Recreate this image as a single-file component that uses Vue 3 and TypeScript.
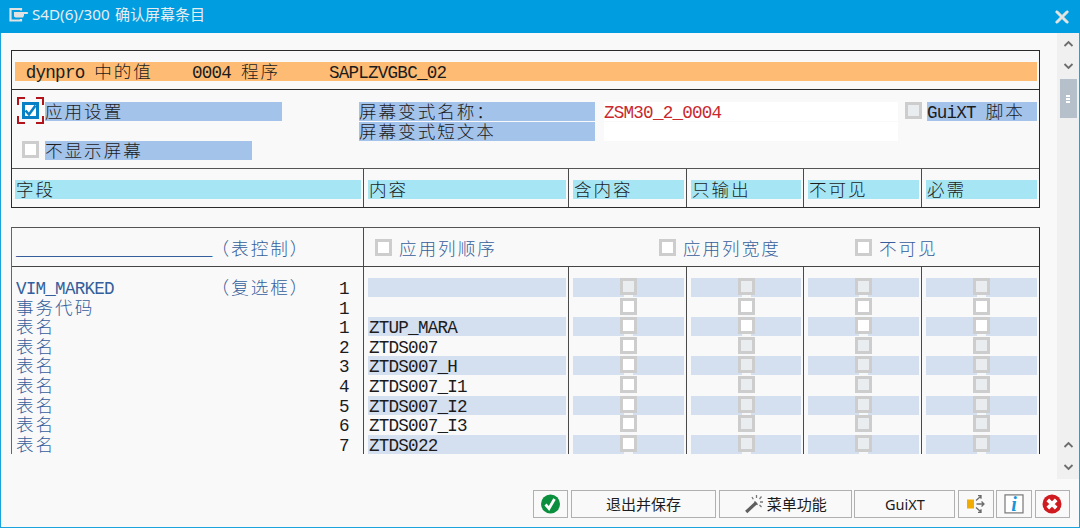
<script setup lang="ts">
import { h, type FunctionalComponent } from 'vue'

// Text on a character grid: half-width glyphs take one cell, full-width ones two.
const Mono: FunctionalComponent<{ text: string }> = (props) =>
  h(
    'span',
    { class: 'mono' },
    (props.text.match(/[\x20-\x7e]+|[^\x20-\x7e]+/g) ?? []).map((run) =>
      h('span', { class: run.charCodeAt(0) < 127 ? 'half' : 'full' }, run),
    ),
  )
Mono.props = ['text']

interface Row {
  name: string
  kind?: string
  count: number
  content: string
  enabled: boolean[]
}

const columns = ['字段', '内容', '含内容', '只输出', '不可见', '必需']
const all = [true, true, true, true]
const none = [false, false, false, false]
const first = [true, false, false, false]

const rows: Row[] = [
  { name: 'VIM_MARKED', kind: '（复选框）', count: 1, content: '', enabled: none },
  { name: '事务代码', count: 1, content: '', enabled: all },
  { name: '表名', count: 1, content: 'ZTUP_MARA', enabled: all },
  { name: '表名', count: 2, content: 'ZTDS007', enabled: first },
  { name: '表名', count: 3, content: 'ZTDS007_H', enabled: first },
  { name: '表名', count: 4, content: 'ZTDS007_I1', enabled: first },
  { name: '表名', count: 5, content: 'ZTDS007_I2', enabled: first },
  { name: '表名', count: 6, content: 'ZTDS007_I3', enabled: first },
  { name: '表名', count: 7, content: 'ZTDS022', enabled: first },
]
</script>

<template>
  <div class="window">
    <header class="titlebar">
      <svg class="app-icon" width="21" height="17" viewBox="0 0 21 17">
        <path d="M13 4.500V3H2.500v11.500H13V13" fill="none" stroke="#e2e2e2" stroke-width="2.200" />
        <path d="M6 6h13.500l.8.900-.8 1.100h-3.500v1.500l-1 2H7.500L6 10.500z" fill="#e2e2e2" />
      </svg>
      <h1 class="title"><span class="title-code">S4D(6)/300</span><span>确认屏幕条目</span></h1>
      <svg class="close" width="16" height="16" viewBox="0 0 16 16">
        <path d="M2 2h1.500L8 6.500 12.500 2H14v1.500L9.500 8l4.500 4.500V14h-1.500L8 9.500 3.500 14H2v-1.500L6.500 8 2 3.500z" fill="#e9e6e1" stroke="#e9e6e1" stroke-width="1" />
      </svg>
    </header>

    <div class="body">
      <main class="content">
        <section class="panel top">
          <div class="program"><div class="program-bar"><Mono text=" dynpro 中的值    0004 程序     SAPLZVGBC_02" /></div></div>
          <div class="form">
            <div class="settings">
              <div class="line">
                <span class="focus">
                  <span class="check checked">
                    <svg width="17" height="17" viewBox="0 0 17 17"><path d="M3.500 8.500l3.500 4 6.500-9" fill="none" stroke="#0880c6" stroke-width="2.600" /></svg>
                  </span>
                  <i class="tl"></i><i class="tr"></i><i class="bl"></i><i class="br"></i>
                </span>
                <span class="label w-apply"><Mono text="应用设置" /></span>
              </div>
              <div class="line hide-line">
                <span class="check"></span>
                <span class="label w-hide"><Mono text="不显示屏幕" /></span>
              </div>
            </div>
            <div class="names">
              <span class="label"><Mono text="屏幕变式名称：" /></span>
              <span class="label"><Mono text="屏幕变式短文本" /></span>
            </div>
            <div class="inputs">
              <span class="input"><Mono text="ZSM30_2_0004" /></span>
              <span class="input"></span>
            </div>
            <span class="check disabled"></span>
            <span class="label w-script"><Mono text="GuiXT 脚本" /></span>
          </div>
          <div class="cols heads">
            <div v-for="c in columns" :key="c" class="col"><div class="head"><Mono :text="c" /></div></div>
          </div>
        </section>

        <section class="panel table">
          <div class="control">
            <div class="control-name"><Mono text="____________________（表控制）" /></div>
            <div class="options">
              <span class="option o1"><span class="check"></span><Mono text="应用列顺序" /></span>
              <span class="option o2"><span class="check"></span><Mono text="应用列宽度" /></span>
              <span class="option o3"><span class="check"></span><Mono text="不可见" /></span>
            </div>
          </div>
          <div class="cols rows">
            <div class="col names-col">
              <div v-for="(r, i) in rows" :key="i" class="row field">
                <span class="field-name"><Mono :text="r.name" /></span>
                <span class="field-kind"><Mono v-if="r.kind" :text="r.kind" /></span>
                <span class="field-count"><Mono :text="String(r.count)" /></span>
              </div>
            </div>
            <div class="col">
              <div v-for="(r, i) in rows" :key="i" class="row value" :class="{ band: i % 2 === 0 }"><Mono :text="r.content" /></div>
            </div>
            <div v-for="n in 4" :key="n" class="col">
              <div v-for="(r, i) in rows" :key="i" class="row cell" :class="{ band: i % 2 === 0 }">
                <span class="check notch" :class="{ disabled: !r.enabled[n - 1] }"></span>
              </div>
            </div>
          </div>
        </section>
      </main>

      <aside class="scrollbar">
        <svg width="11" height="8" viewBox="0 0 11 8"><path d="M1.500 6l4-4 4 4" /></svg>
        <svg width="11" height="8" viewBox="0 0 11 8"><path d="M1.500 2l4 4 4-4" /></svg>
        <div class="thumb"><i></i><i></i><i></i></div>
        <svg class="low" width="11" height="8" viewBox="0 0 11 8"><path d="M1.500 6l4-4 4 4" /></svg>
        <svg width="11" height="8" viewBox="0 0 11 8"><path d="M1.500 2l4 4 4-4" /></svg>
      </aside>
    </div>

    <footer class="buttons">
      <button class="btn small">
        <svg width="20" height="20" viewBox="0 0 20 20"><circle cx="9.500" cy="10" r="9.500" fill="#0b8e3d" /><path d="M4.500 10.500l3.500 4L13.500 5" fill="none" stroke="#fff" stroke-width="2.800" /></svg>
      </button>
      <button class="btn save">退出并保存</button>
      <button class="btn menu">
        <svg width="20" height="20" viewBox="0 0 20 20">
          <path d="M2.200 18L12.500 8.500" stroke="#5f5f5f" stroke-width="3.200" />
          <path d="M10.300 7.600l3.200 3.200" stroke="#5f5f5f" stroke-width="1.200" />
          <path d="M8 3l1.300 2.300M12.500 1v3M17.500 2.500l-2 2.500M16 8h3M15.500 11l2 2" stroke="#777" stroke-width="1.300" />
        </svg>
        菜单功能
      </button>
      <button class="btn gui">GuiXT</button>
      <button class="btn small">
        <svg width="20" height="20" viewBox="0 0 20 20">
          <rect x="1" y="5.500" width="7" height="9" fill="#f2ab00" />
          <g fill="none" stroke="#6b6b6b" stroke-width="1.300"><path d="M10 6.500l4.500-4M12 1.700h3v3M10.500 10h7.500M15.500 7.500l2.500 2.500-2.500 2.500M10 13.500l4.500 4M12 18.300h3v-3" /></g>
        </svg>
      </button>
      <button class="btn small">
        <svg width="20" height="20" viewBox="0 0 20 20">
          <rect x="1" y=".9" width="18" height="18" fill="#fff" stroke="#777" stroke-width="1.200" />
          <text x="10" y="16.500" text-anchor="middle" class="info">i</text>
        </svg>
      </button>
      <button class="btn small">
        <svg width="20" height="20" viewBox="0 0 20 20"><circle cx="10" cy="10" r="9.500" fill="#cf1a20" /><path d="M5.800 5.800l8.400 8.400M14.200 5.800l-8.400 8.400" stroke="#fff" stroke-width="3.800" /></svg>
      </button>
    </footer>
  </div>
</template>

<style>
body {
  margin: 0;
  overflow: hidden;
}
.mono {
  display: flex;
  align-items: baseline;
  height: 19px;
  white-space: pre;
}
.mono .half {
  font-family: 'Liberation Mono', monospace;
  font-size: 17.6px;
  line-height: 22.6px;
  letter-spacing: -0.78px;
}
.mono .full {
  font-family: 'Noto Sans CJK SC', sans-serif;
  font-size: 17.6px;
  line-height: 16.8px;
  font-weight: 300;
  letter-spacing: 1.96px;
}
.mono .full:only-child {
  line-height: 18.8px;
}
</style>

<style scoped>
.window {
  box-sizing: border-box;
  width: 1080px;
  height: 528px;
  display: flex;
  flex-direction: column;
  background: #f9f9f9;
  border: 1px solid #1ba3dd;
  border-top: 0;
  font-family: 'Noto Sans', 'Noto Sans CJK SC', sans-serif;
  color: #1c1c1c;
}
.titlebar {
  height: 33px;
  flex: none;
  display: flex;
  align-items: center;
  margin: 0 -1px;
  padding: 0 10px 0 8px;
  background: #009de0;
}
.app-icon {
  margin-top: -5px;
}
.title {
  display: flex;
  align-items: baseline;
  gap: 5px;
  margin: -6px auto 0 3px;
  font-size: 15px;
  line-height: 20px;
  font-weight: 400;
  color: #e8edf0;
}
.title-code {
  width: 78px;
  font-size: 15.2px;
}
.body {
  height: 446px;
  display: flex;
  justify-content: space-between;
}
.content {
  padding: 17px 0 0 10px;
}
.panel {
  box-sizing: border-box;
  width: 1029px;
  border: 1px solid #2b2b2b;
}
.top {
  height: 158px;
}
.program {
  height: 38px;
  border-bottom: 1px solid #2b2b2b;
  box-sizing: content-box;
  display: flex;
  align-items: center;
}
.program-bar {
  box-sizing: border-box;
  width: 1022px;
  height: 19px;
  margin: 3px 0 0 3px;
  padding-left: 1px;
  background: #fdbb73;
}
.form {
  height: 66px;
  padding-top: 12px;
  border-bottom: 1px solid #555;
  display: flex;
  align-items: flex-start;
}
.settings {
  width: 347px;
}
.line {
  display: flex;
  gap: 6px;
  padding-left: 10px;
}
.hide-line {
  margin-top: 20px;
}
.label {
  display: block;
  height: 19px;
  background: #a3c3ea;
}
.w-apply { width: 237px; }
.w-hide { width: 207px; }
.w-script { width: 110px; margin-left: 5px; }
.names {
  width: 236px;
  margin-right: 9px;
}
.names, .inputs {
  display: flex;
  flex-direction: column;
  gap: 1px;
}
.inputs {
  width: 294px;
  margin-right: 7px;
}
.input {
  height: 19px;
  background: #fff;
  color: #c9282d;
}
.check {
  position: relative;
  box-sizing: border-box;
  display: block;
  flex: none;
  width: 17px;
  height: 17px;
  border: 3px solid #cdcdcd;
  background: #fff;
}
.check.disabled {
  background: #e9edf0;
}
.check.checked {
  border-color: #0880c6;
}
.checked svg {
  position: absolute;
  left: -3px;
  top: -3px;
}
.focus {
  position: relative;
  width: 17px;
}
.focus i {
  position: absolute;
  width: 6px;
  height: 6px;
  border: 0 solid #b3131b;
}
.focus .tl { left: -5px; top: -5px; border-width: 2px 0 0 2px; }
.focus .tr { right: -5px; top: -5px; border-width: 2px 2px 0 0; }
.focus .bl { left: -5px; bottom: -3px; border-width: 0 0 2px 2px; }
.focus .br { right: -5px; bottom: -3px; border-width: 0 2px 2px 0; }
.cols {
  display: grid;
  grid-template-columns: 352px 205px 118px 117px 118px 117px;
}
.heads {
  height: 38px;
}
.col {
  padding: 11px 2px 0 4px;
  border-right: 1px solid #4a4a4a;
}
.col:first-child {
  padding-left: 3px;
}
.col:last-child {
  border-right: 0;
}
.head {
  height: 19px;
  padding-left: 1px;
  background: #a6e6f4;
}
.table {
  height: 227px;
  margin-top: 19px;
  border-color: #555 #2b2b2b #555 #666;
  border-bottom: 0;
}
.control {
  display: flex;
  height: 38px;
  border-bottom: 1px solid #444;
  color: #355f9c;
}
.control-name {
  box-sizing: border-box;
  width: 352px;
  padding: 11px 0 0 4px;
  border-right: 1px solid #4a4a4a;
}
.options {
  display: flex;
  padding: 11px 0 0 11px;
}
.option {
  display: flex;
  gap: 7px;
}
.o1 { width: 284px; }
.o2 { width: 196px; }
.row {
  height: 19.6px;
}
.value {
  padding-left: 1px;
}
.rows .col {
  height: 176px;
}
.band {
  background: linear-gradient(#d4dff0 19px, transparent 19px);
}
.field {
  display: flex;
  color: #355f9c;
  padding-left: 1px;
}
.field-name { width: 195.6px; }
.field-kind { width: 127.5px; }
.field-count { color: #1c1c1c; }
.cell {
  display: flex;
  justify-content: center;
}
.notch::after {
  content: '';
  position: absolute;
  left: 1px;
  top: 14px;
  width: 9px;
  height: 2px;
  background: #f7f8fa;
}
.scrollbar {
  box-sizing: border-box;
  width: 22px;
  display: flex;
  flex-direction: column;
  align-items: center;
  gap: 14px;
  padding: 7px 0 8px;
  background: #f0f0f0;
}
.scrollbar svg {
  flex: none;
  fill: none;
  stroke: #6d6d6d;
  stroke-width: 1.8;
}
.thumb {
  width: 17px;
  height: 39px;
  margin-top: -5px;
  display: flex;
  flex-direction: column;
  align-items: center;
  justify-content: center;
  gap: 1px;
  background: #b5c0cb;
}
.thumb i {
  width: 4px;
  height: 2px;
  background: #fff;
}
.low {
  margin-top: auto;
}
.buttons {
  display: flex;
  justify-content: flex-end;
  gap: 2.7px;
  padding: 11px 9px 0 0;
}
.btn {
  box-sizing: border-box;
  height: 28px;
  padding: 0;
  display: flex;
  align-items: center;
  justify-content: center;
  gap: 3px;
  border: 1px solid #b0b0b0;
  background: #f9f9f9;
  font: 15px/20px 'Noto Sans', 'Noto Sans CJK SC', sans-serif;
  color: #1c1c1c;
}
.small { width: 35.5px; }
.save { width: 145px; }
.menu { width: 133px; }
.gui { width: 101px; font-size: 14.5px; }
.info {
  font: italic bold 20px 'Liberation Serif', serif;
  fill: #1597dd;
}
</style>
